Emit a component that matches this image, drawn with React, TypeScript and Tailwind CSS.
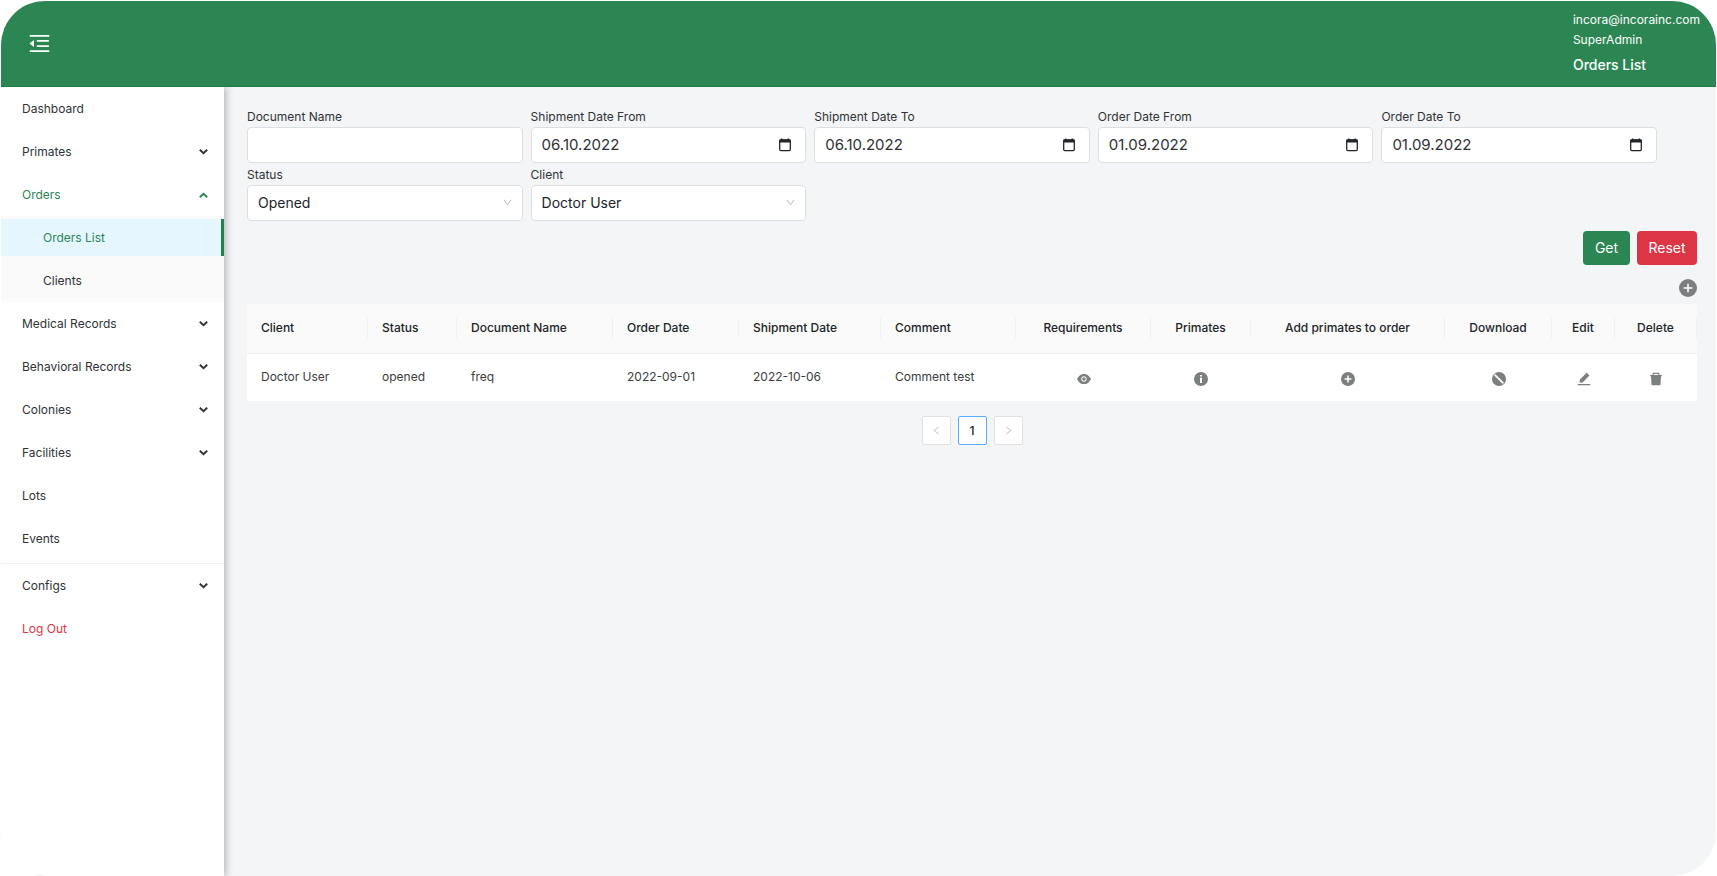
import { ReactNode, useState } from "react";
import clsx from "clsx";
import {
  AiFillDelete,
  AiFillEdit,
  AiFillEye,
  AiOutlineDown,
  AiOutlineLeft,
  AiOutlineMenuFold,
  AiOutlineRight,
} from "react-icons/ai";

const Arrow = ({ up }: { up?: boolean }) => (
  <svg width="9" height="6" viewBox="0 0 9 6" fill="none" stroke="currentColor" strokeWidth="1.9" className={clsx(up && "rotate-180")}>
    <path d="M0.8 0.8 4.5 4.3 8.2 0.8" />
  </svg>
);

// filled disc with a white mark on it
const DiscIcon = ({ size, mark, strokeWidth = 1.5 }: { size: number; mark: string; strokeWidth?: number }) => (
  <svg width={size} height={size} viewBox="0 0 14 14" fill="none">
    <circle cx="7" cy="7" r="7" fill="currentColor" />
    <path d={mark} stroke="white" strokeWidth={strokeWidth} />
  </svg>
);

const plusMark = "M7 3.6v6.8M3.6 7h6.8";
const infoMark = "M7 3v1.6M7 5.7V11";
const forbidMark = "M2.6 2.6l8.8 8.8";

interface MenuItemProps {
  label: string;
  expandable?: boolean;
  open?: boolean;
  className?: string;
}

const MenuItem = ({ label, expandable, open, className }: MenuItemProps) => {
  const style = clsx("flex h-[43px] w-full items-center justify-between pl-[21px] pr-4", className ?? "text-[#303236]");

  return (
    <li>
      {expandable ? (
        <button className={style} aria-expanded={!!open}>
          {label}
          <Arrow up={open} />
        </button>
      ) : (
        <a href="#" className={style}>{label}</a>
      )}
    </li>
  );
};

const Sidebar = () => {
  return (
    <nav className="z-10 w-[223px] shrink-0 bg-white text-xs shadow-[2px_0_7px_rgba(20,40,40,0.3)]">
      <ul>
        <MenuItem label="Dashboard" />
        <MenuItem label="Primates" expandable />
        <MenuItem label="Orders" expandable open className="text-[#2b8654]" />
        <li>
          <ul className="bg-[#fafafa]">
            <li className="flex h-[43px] items-center">
              <a href="#" className="flex h-[37px] w-full items-center border-r-3 border-[#1f8349] bg-[#e6f6ff] pl-[42px] text-[#2b8654]">Orders List</a>
            </li>
            <li className="flex h-[43px] items-center">
              <a href="#" className="w-full pl-[42px] text-[#303236]">Clients</a>
            </li>
          </ul>
        </li>
        <MenuItem label="Medical Records" expandable />
        <MenuItem label="Behavioral Records" expandable />
        <MenuItem label="Colonies" expandable />
        <MenuItem label="Facilities" expandable />
        <MenuItem label="Lots" />
        <MenuItem label="Events" />
        <li className="mt-[3px] h-px bg-[#f0f0f0]" />
        <MenuItem label="Configs" expandable />
        <MenuItem label="Log Out" className="text-[#dc3545]" />
      </ul>
    </nav>
  );
};

const Field = ({ id, label, children }: { id: string; label: string; children: ReactNode }) => (
  <div>
    <label htmlFor={id} className="block h-5 text-xs leading-5 text-[#303236]">{label}</label>
    {children}
  </div>
);

const TextField = ({ id, label }: { id: string; label: string }) => (
  <Field id={id} label={label}>
    <input id={id} type="text" className="block h-9 w-full rounded border border-[#dcdfe1] bg-white px-2.5 text-[15px]" />
  </Field>
);

const DateField = ({ id, label, initial }: { id: string; label: string; initial: string }) => {
  const [value, setValue] = useState(initial);

  return (
    <Field id={id} label={label}>
      <div className="flex h-9 items-center rounded border border-[#dcdfe1] bg-white pl-2.5 pr-3.5">
        <input id={id} type="text" value={value} onChange={(e) => setValue(e.target.value)} className="min-w-0 flex-1 text-[15px] text-[#303236] outline-none" />
        <button type="button" aria-label={`Pick ${label}`} className="text-[#212529]">
          <svg width="12" height="14" viewBox="0 0 12 14" fill="none">
            <rect x="0.7" y="2" width="10.6" height="10.6" rx="1" stroke="currentColor" strokeWidth="1.3" />
            <path d="M0.5 1.6h11v3H0.5zM2 0.4h1.4v2H2zM8.6 0.4H10v2H8.6z" fill="currentColor" />
          </svg>
        </button>
      </div>
    </Field>
  );
};

const SelectField = ({ id, label, options }: { id: string; label: string; options: string[] }) => (
  <Field id={id} label={label}>
    <div className="relative">
      <select id={id} className="block h-9 w-full appearance-none rounded border border-[#dcdfe1] bg-white px-2.5 text-sm text-[#212529]">
        {options.map((option) => <option key={option}>{option}</option>)}
      </select>
      <AiOutlineDown size={11} className="pointer-events-none absolute right-2.5 top-3 text-[#bfbfbf]" />
    </div>
  </Field>
);

const columns = [
  { title: "Client", width: "w-[121px]" },
  { title: "Status", width: "w-[89px]" },
  { title: "Document Name", width: "w-[156px]" },
  { title: "Order Date", width: "w-[126px]" },
  { title: "Shipment Date", width: "w-[142px]" },
  { title: "Comment", width: "w-[135px]" },
  { title: "Requirements", width: "w-[135px]", centered: true },
  { title: "Primates", width: "w-[100px]", centered: true },
  { title: "Add primates to order", width: "w-[194px]", centered: true },
  { title: "Download", width: "w-[107px]", centered: true },
  { title: "Edit", width: "w-[63px]", centered: true },
  { title: "Delete", width: "w-[82px]", centered: true },
];

const order = ["Doctor User", "opened", "freq", "2022-09-01", "2022-10-06", "Comment test"];

const actions = [
  { label: "View requirements", icon: <AiFillEye size={16} /> },
  { label: "View primates", icon: <DiscIcon size={14} mark={infoMark} strokeWidth={2} /> },
  { label: "Add primates to order", icon: <DiscIcon size={14} mark={plusMark} /> },
  { label: "Download", icon: <DiscIcon size={14} mark={forbidMark} strokeWidth={1.8} /> },
  { label: "Edit", icon: <AiFillEdit size={16} /> },
  { label: "Delete", icon: <AiFillDelete size={16} /> },
];

const OrdersTable = () => {
  return (
    <table className="w-full table-fixed text-left text-xs">
      <thead>
        <tr className="h-[49px] border-b border-[#f0f0f0] bg-[#fafafa]">
          {columns.map(({ title, width, centered }) => (
            <th key={title} className={clsx("p-0 font-medium text-[#212427]", width)}>
              <div className={clsx("flex h-5 items-center whitespace-nowrap border-r border-[#f0f0f0]", centered ? "justify-center" : "pl-3.5")}>{title}</div>
            </th>
          ))}
        </tr>
      </thead>
      <tbody>
        <tr className="h-12 bg-white text-[#3a3d40]">
          {order.map((value) => <td key={value} className="p-0 pl-3.5">{value}</td>)}
          {actions.map(({ label, icon }) => (
            <td key={label} className="p-0 pt-1">
              <button aria-label={label} className="mx-auto flex h-5 items-center text-[#7c7f7f]">{icon}</button>
            </td>
          ))}
        </tr>
      </tbody>
    </table>
  );
};

const Pagination = () => {
  return (
    <div className="mt-[15px] flex justify-center gap-[7px] text-xs">
      <button aria-label="Previous page" disabled className="flex size-[29px] items-center justify-center rounded-xs border border-[#dfe1e2] bg-white text-[#c4c4c4]">
        <AiOutlineLeft size={11} />
      </button>
      <button aria-current="page" className="size-[29px] rounded-xs border border-[#5aacff] bg-white font-medium text-[#212529]">1</button>
      <button aria-label="Next page" disabled className="flex size-[29px] items-center justify-center rounded-xs border border-[#dfe1e2] bg-white text-[#c4c4c4]">
        <AiOutlineRight size={11} />
      </button>
    </div>
  );
};

const App = () => {
  return (
    <div className="bg-white px-px pt-px font-['Inter','Liberation_Sans',sans-serif]">
      <div className="flex min-h-[calc(100vh-1px)] flex-col overflow-hidden rounded-[44px] bg-[#f4f5f7]">
        <header className="z-20 flex h-[86px] items-start justify-between border-b border-[#1f7c47] bg-[#2b8654] pl-[26px] pr-4 text-white">
          <button aria-label="Collapse menu" className="mt-[30px]">
            <AiOutlineMenuFold size={25} />
          </button>
          <div className="pt-[9px] text-xs leading-5">
            <p>incora@incorainc.com</p>
            <p>SuperAdmin</p>
            <h1 className="mt-[3px] text-sm font-medium leading-6">Orders List</h1>
          </div>
        </header>

        <div className="flex flex-1">
          <Sidebar />

          <main className="min-w-0 flex-1 pb-5 pl-[23px] pr-[19px] pt-5">
            <form onSubmit={(e) => e.preventDefault()}>
              <div className="grid grid-cols-5 gap-x-2 gap-y-[2px] pr-10">
                <TextField id="document-name" label="Document Name" />
                <DateField id="shipment-from" label="Shipment Date From" initial="06.10.2022" />
                <DateField id="shipment-to" label="Shipment Date To" initial="06.10.2022" />
                <DateField id="order-from" label="Order Date From" initial="01.09.2022" />
                <DateField id="order-to" label="Order Date To" initial="01.09.2022" />
                <SelectField id="status" label="Status" options={["Opened", "Closed"]} />
                <SelectField id="client" label="Client" options={["Doctor User"]} />
              </div>

              <div className="mt-2.5 flex justify-end gap-[7px] text-sm text-white">
                <button type="submit" className="h-[34px] w-[47px] rounded bg-[#2b8654]">Get</button>
                <button type="reset" className="h-[34px] w-[60px] rounded bg-[#dc3545]">Reset</button>
              </div>
            </form>

            <div className="mb-[7px] mt-3.5 flex justify-end">
              <button aria-label="Add order" className="text-[#7c7f7f]">
                <DiscIcon size={18} mark={plusMark} strokeWidth={1.2} />
              </button>
            </div>

            <OrdersTable />
            <Pagination />
          </main>
        </div>
      </div>
    </div>
  );
};

export default App;
